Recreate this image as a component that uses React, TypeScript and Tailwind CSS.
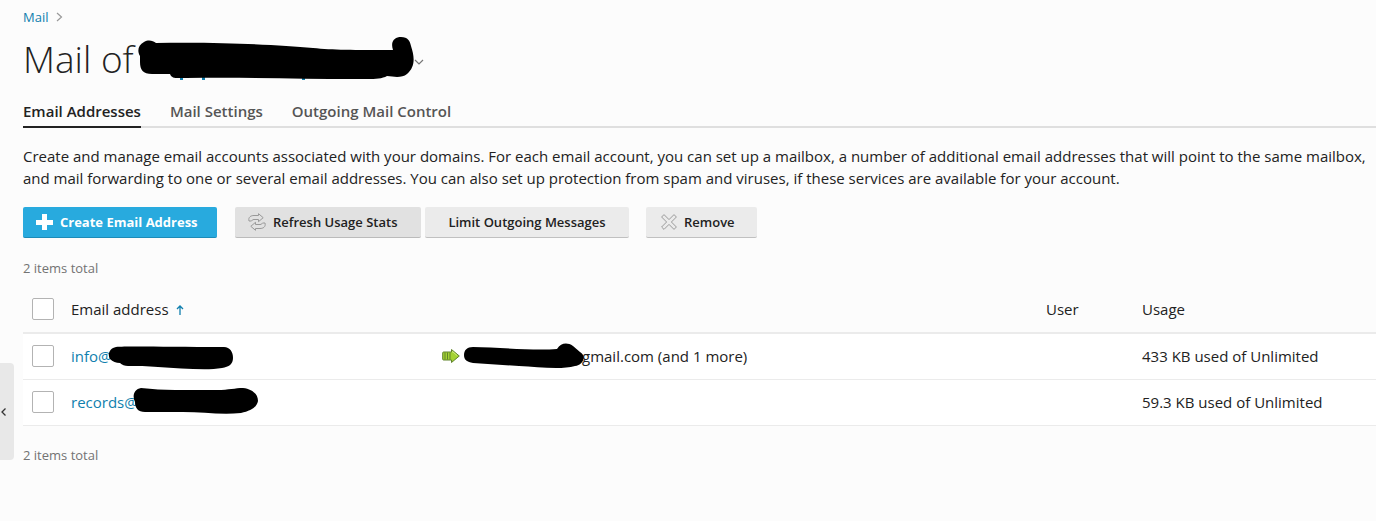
import React, { useState } from 'react';

interface EmailAccount {
  name: string;
  usage: string;
  markPosition: string;
  mark: string;
  forward?: string;
}

const tabs = ['Email Addresses', 'Mail Settings', 'Outgoing Mail Control'];

const accounts: EmailAccount[] = [
  {
    name: 'info@',
    usage: '433 KB used of Unlimited',
    markPosition: 'left-[37px] top-0',
    mark: 'M8 2 C20 1 60 2 116 2 C122 2 125 7 125 13 C125 19 121 22 114 23 C98 26 72 23 50 22 C40 21 28 21 20 21 Q15 21 12 18 Q6 18 2 14 C-1 9 2 3 8 2 Z',
    forward: 'gmail.com (and 1 more)',
  },
  {
    name: 'records@',
    usage: '59.3 KB used of Unlimited',
    markPosition: 'left-[62px] -top-1',
    mark: 'M8 1 C20 2 30 3 42 3 L84 3 C96 3 102 1 110 1 C119 2 125 7 125 14 C124 20 118 24 108 26 C88 28 70 25 50 25 L12 25 C5 25 2 21 2 15 C-1 9 1 2 8 1 Z',
  },
];

const PlusIcon: React.FC = () => (
  <svg className="w-[17px] h-4" viewBox="0 0 17 16" fill="white">
    <path d="M6 0h5v6h6v5h-6v5H6v-5H0V6h6z" />
  </svg>
);

const RefreshIcon: React.FC = () => (
  <svg className="w-[18px] h-[18px]" viewBox="0 0 18 18" fill="none" stroke="#999" strokeLinejoin="round">
    <path d="M1 8C0 4 3 2.500 6 2.500h4.500V.7l4.700 4-4.700 4V6.500H6C4 6.500 4.200 7.500 3.500 8Z" />
    <path d="M17 10c1 4-2 5.500-5 5.500H7.500v1.800l-4.700-4 4.700-4v2.200H12c2 0 1.800-1 2.500-1.500Z" />
  </svg>
);

const RemoveIcon: React.FC = () => (
  <svg className="w-4 h-4" viewBox="0 0 16 16" fill="none" stroke="#999" strokeLinejoin="round">
    <path d="M3 .6 8 5.600l5-5L15.400 3l-5 5 5 5-2.400 2.400-5-5-5 5L.6 13l5-5-5-5Z" />
  </svg>
);

const ForwardIcon: React.FC = () => (
  <svg className="w-[18px] h-4" viewBox="0 0 18 16">
    <path
      d="M9.500 4V1.500L17.300 8l-7.800 6.500V12h-8Q.7 12 .7 11V5Q.7 4 1.500 4Z"
      fill="#a4d233"
      stroke="#60842c"
      strokeLinejoin="round"
    />
    <path d="M3 4.500v7M5.500 4.500v7M8 4.500v7" stroke="#60842c" />
    <path d="M10.500 4.500v-1l4.500 4" stroke="#d0ed7d" fill="none" />
  </svg>
);

const Checkbox: React.FC<{ label: string }> = ({ label }) => (
  <input
    type="checkbox"
    aria-label={label}
    className="block appearance-none w-[22px] h-[22px] ml-[9px] bg-white border border-[#b3b3b3] rounded-xs checked:bg-[#28aade]"
  />
);

const App: React.FC = () => {
  const [activeTab, setActiveTab] = useState(0);

  return (
    <div className="flex min-h-screen bg-[#fcfcfc] font-['Open_Sans',sans-serif] text-[15px] leading-[22px] text-[#222]">
      <aside className="w-[23px] shrink-0 pt-[363px]">
        <button
          aria-label="Collapse sidebar"
          className="flex items-center w-3.5 h-[97px] rounded-r bg-[#e8e8e8]"
        >
          <svg className="w-2 h-2.5" viewBox="0 0 8 10" fill="none" stroke="#333" strokeWidth="1.300">
            <path d="M5.500 1.500 2 5l3.500 3.500" />
          </svg>
        </button>
      </aside>

      <main className="flex-1 min-w-0 overflow-hidden">
        <nav className="flex items-center gap-2 h-[34px] text-[13px]" aria-label="Breadcrumb">
          <a href="#" className="text-[#107fae]">Mail</a>
          <svg className="w-[7px] h-2.5" viewBox="0 0 7 10" fill="none" stroke="#999" strokeWidth="1.200">
            <path d="m1 1 4.500 4L1 9" />
          </svg>
        </nav>

        <header className="flex items-center h-[50px]">
          <h1 className="text-[37px] leading-[50px] font-light whitespace-nowrap">Mail of</h1>
          <button aria-label="Switch domain" className="flex items-center ml-1">
            <svg className="w-[276px] h-11" viewBox="0 0 276 44">
              <path d="M42 38h3v5h-3zM64 38h3v5h-3zM164 38h3v5h-3z" fill="#107fae" />
              <path d="M6 5C11 2 15 4 18 6C90 5 140 8 175 11C195 13 215 13 255 13C252 4 257 0 263 0C270 0 272 4 273 9C277 21 277 30 269 37C264 41 257 40 249 39C242 43 230 42 218 42C160 42 110 40 48 41C38 41 34 42 32 37H14C5 37 2 33 2 25V19C-1 14 0 8 6 5Z" />
            </svg>
            <svg className="w-2.5 h-2 mt-1.5" viewBox="0 0 10 8" fill="none" stroke="#777" strokeWidth="1.200">
              <path d="m1 2 4 4 4-4" />
            </svg>
          </button>
        </header>

        <div role="tablist" className="flex gap-[29px] mt-[15px] border-b-2 border-[#dfdfdf] font-semibold">
          {tabs.map((tab, index) => (
            <button
              key={tab}
              role="tab"
              aria-selected={activeTab === index}
              onClick={() => setActiveTab(index)}
              className={`-mb-0.5 pt-px pb-1 border-b-2 ${
                activeTab === index ? 'border-[#222] text-[#222]' : 'border-transparent text-[#555]'
              }`}
            >
              {tab}
            </button>
          ))}
        </div>

        <p className="mt-[17px] whitespace-nowrap">
          Create and manage email accounts associated with your domains. For each email account, you can set up a
          mailbox, a number of additional email addresses that will point to the same mailbox,
          <br />
          and mail forwarding to one or several email addresses. You can also set up protection from spam and viruses,
          if these services are available for your account.
        </p>

        <div className="flex mt-[18px] text-[13px] font-semibold">
          <button className="flex items-center gap-[7px] h-[31px] w-[194px] pl-[13px] mr-[18px] rounded-xs bg-[#28aade] border-b border-[#1c8bb8] text-white font-bold whitespace-nowrap">
            <PlusIcon />
            Create Email Address
          </button>
          <button className="flex items-center gap-[7px] h-[31px] w-[186px] pl-[13px] mr-1 rounded-xs bg-[#e1e1e1] border-b border-[#bbb] whitespace-nowrap">
            <RefreshIcon />
            Refresh Usage Stats
          </button>
          <button className="h-[31px] w-[204px] mr-[17px] rounded-xs bg-[#ebebeb] border-b border-[#c0c0c0] whitespace-nowrap">
            Limit Outgoing Messages
          </button>
          <button className="flex items-center gap-[7px] h-[31px] w-[111px] pl-[15px] rounded-xs bg-[#ebebeb] border-b border-[#c0c0c0]">
            <RemoveIcon />
            Remove
          </button>
        </div>

        <div className="mt-[19px] text-[13px] text-[#737373]">2 items total</div>

        <table className="w-full mt-[7px] table-fixed text-left">
          <colgroup>
            <col className="w-12" />
            <col className="w-[371px]" />
            <col />
            <col className="w-24" />
            <col className="w-[234px]" />
          </colgroup>
          <thead>
            <tr className="h-[47px] border-b-2 border-[#ebebeb]">
              <th><Checkbox label="Select all" /></th>
              <th className="font-normal">
                <button className="flex items-center gap-[7px]">
                  Email address
                  <svg className="w-2 h-2.5 mt-0.5" viewBox="0 0 8 10" fill="none" stroke="#107fae" strokeWidth="1.300">
                    <path d="M4 10V1M1 4l3-3 3 3" />
                  </svg>
                </button>
              </th>
              <th aria-label="Forwarding" />
              <th className="font-normal">User</th>
              <th className="font-normal">Usage</th>
            </tr>
          </thead>
          <tbody>
            {accounts.map((account) => (
              <tr key={account.name} className="h-[46px] bg-white border-b border-[#ebebeb]">
                <td><Checkbox label={`Select ${account.name}`} /></td>
                <td>
                  <a href="#" className="relative block w-fit text-[#107fae]">
                    {account.name}
                    <svg className={`absolute w-[126px] h-7 max-w-none ${account.markPosition}`} viewBox="0 0 126 28">
                      <path d={account.mark} fill="black" />
                    </svg>
                  </a>
                </td>
                <td>
                  {account.forward && (
                    <div className="flex items-center whitespace-nowrap">
                      <ForwardIcon />
                      <svg className="relative w-[122px] h-7 ml-[3px] -mr-[3px]" viewBox="0 0 122 28">
                        <path d="M10 5C34 5 70 9 94 7C98 1 104 0 110 4L117 10C124 14 120 23 112 24C98 28 75 25 56 24L10 21C4 20 1 18 1 13C1 8 4 5 10 5Z" />
                      </svg>
                      {account.forward}
                    </div>
                  )}
                </td>
                <td />
                <td className="whitespace-nowrap">{account.usage}</td>
              </tr>
            ))}
          </tbody>
        </table>

        <div className="mt-[18px] text-[13px] text-[#737373]">2 items total</div>
      </main>
    </div>
  );
};

export default App;
